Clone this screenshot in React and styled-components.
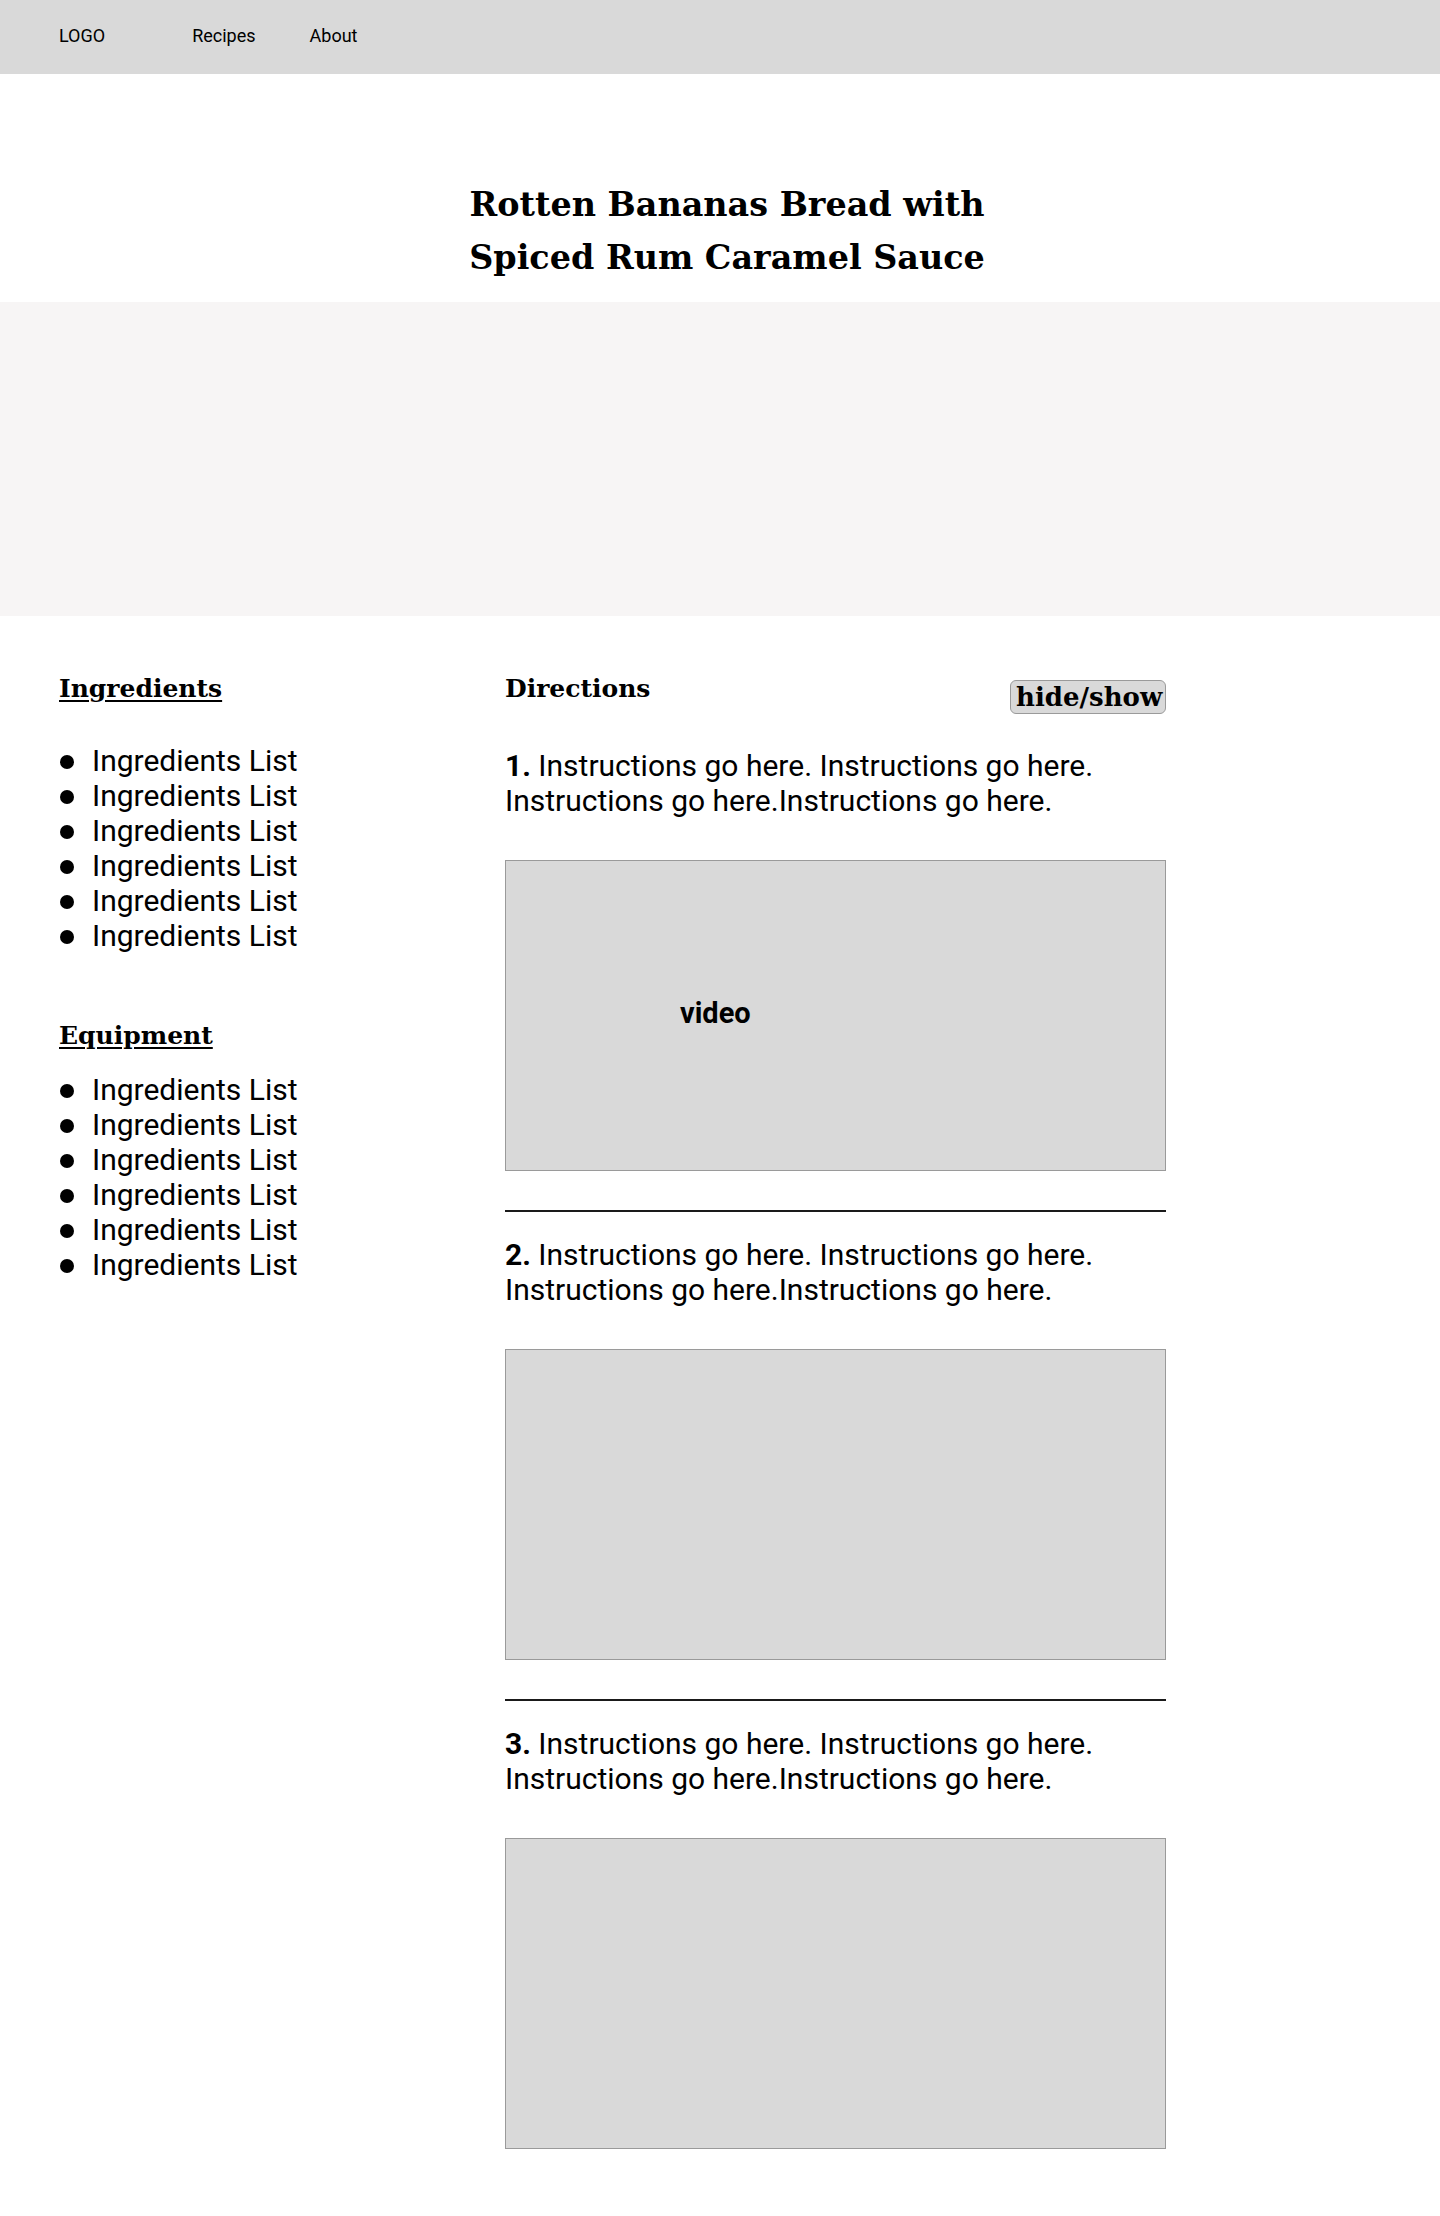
import React from 'react';
import styled, { createGlobalStyle } from 'styled-components';

const GlobalStyle = createGlobalStyle`
  body {
    margin: 0;
    background: #ffffff;
    color: #000000;
    font-family: Roboto, 'Liberation Sans', sans-serif;
  }
`;

const Page = styled.div`
  width: 1440px;
  min-height: 2216px;
  padding-bottom: 71px;
  box-sizing: border-box;
`;

const NavBar = styled.nav`
  height: 74px;
  background: #d9d9d9;
  display: flex;
  align-items: center;
  padding: 0 0 4px 59px;
  box-sizing: border-box;
  font-size: 18px;
  gap: 54px;
`;

const Logo = styled.span`
  margin-right: 33px;
`;

const NavLink = styled.a`
  color: #000;
  text-decoration: none;
`;

const Title = styled.h1`
  margin: 0;
  padding: 105px 0 18px 14px;
  text-align: center;
  font-family: 'DejaVu Serif', 'Liberation Serif', serif;
  font-weight: 700;
  font-size: 33.4px;
  line-height: 52.5px;
`;

const HeroImage = styled.div`
  height: 314px;
  background: #f7f5f5;
`;

const Content = styled.main`
  display: grid;
  grid-template-columns: 446px 661px;
  padding: 56px 0 0 59px;
`;

const Sidebar = styled.aside`
  display: flex;
  flex-direction: column;
`;

const SectionTitle = styled.h2`
  margin: 0 0 ${props => props.$gap}px;
  font-family: 'DejaVu Serif', 'Liberation Serif', serif;
  font-weight: 700;
  font-size: 25px;
  line-height: 34px;
  text-decoration: ${props => (props.$underline ? 'underline' : 'none')};
  text-decoration-thickness: 2px;
  text-underline-offset: 3px;
`;

const List = styled.ul`
  list-style: none;
  margin: 0 0 ${props => props.$after || 0}px;
  padding: 0;
`;

const ListItem = styled.li`
  display: flex;
  align-items: center;
  gap: 18px;
  padding-left: 1px;
  font-size: 30px;
  line-height: 35px;

  &::before {
    content: '';
    width: 14px;
    height: 14px;
    border-radius: 50%;
    background: #000;
    flex-shrink: 0;
    margin-top: 3px;
  }
`;

const Directions = styled.section`
  display: flex;
  flex-direction: column;
`;

const DirectionsHeader = styled.div`
  display: flex;
  justify-content: space-between;
  align-items: flex-start;
  margin-bottom: 34px;
`;

const ToggleButton = styled.button`
  margin-top: 8px;
  height: 34px;
  width: 156px;
  padding: 0 0 0 5px;
  box-sizing: border-box;
  display: flex;
  align-items: center;
  background: #d9d9d9;
  border: 1px solid #9a9a9a;
  border-radius: 6px;
  font-family: 'DejaVu Serif', 'Liberation Serif', serif;
  font-weight: 700;
  font-size: 26px;
  color: #000;
  white-space: nowrap;
  overflow: visible;
  cursor: pointer;
`;

const Instruction = styled.p`
  margin: 0 0 42px;
  font-size: 30px;
  line-height: 35px;

  strong {
    font-weight: 700;
  }
`;

const Divider = styled.hr`
  margin: 39px 0 25px;
  border: 0;
  height: 2px;
  background: #1a1a1a;
`;

const VideoBox = styled.div`
  height: 311px;
  box-sizing: border-box;
  background: #d9d9d9;
  border: 1px solid #9a9a9a;
  display: flex;
  align-items: center;
  padding: 0 0 6px 174px;
  font-size: 29px;
  font-weight: 700;
`;

const ingredients = Array(6).fill('Ingredients List');
const equipment = Array(6).fill('Ingredients List');

const steps = [
  { n: 1, label: 'video' },
  { n: 2, label: '' },
  { n: 3, label: '' },
];

export default function App() {
  return (
    <Page>
      <GlobalStyle />
      <NavBar>
        <Logo>LOGO</Logo>
        <NavLink href="#">Recipes</NavLink>
        <NavLink href="#">About</NavLink>
      </NavBar>

      <Title>
        Rotten Bananas Bread with
        <br />
        Spiced Rum Caramel Sauce
      </Title>
      <HeroImage />

      <Content>
        <Sidebar>
          <SectionTitle $underline $gap={37}>Ingredients</SectionTitle>
          <List $after={66}>
            {ingredients.map((item, i) => (
              <ListItem key={i}>{item}</ListItem>
            ))}
          </List>
          <SectionTitle $underline $gap={19}>Equipment</SectionTitle>
          <List>
            {equipment.map((item, i) => (
              <ListItem key={i}>{item}</ListItem>
            ))}
          </List>
        </Sidebar>

        <Directions>
          <DirectionsHeader>
            <SectionTitle $gap={0}>Directions</SectionTitle>
            <ToggleButton>hide/show</ToggleButton>
          </DirectionsHeader>
          {steps.map(step => (
            <React.Fragment key={step.n}>
              {step.n > 1 && <Divider />}
              <Instruction>
                <strong>{step.n}.</strong> Instructions go here. Instructions go here.
                Instructions go here.Instructions go here.
              </Instruction>
              <VideoBox>{step.label}</VideoBox>
            </React.Fragment>
          ))}
        </Directions>
      </Content>
    </Page>
  );
}
